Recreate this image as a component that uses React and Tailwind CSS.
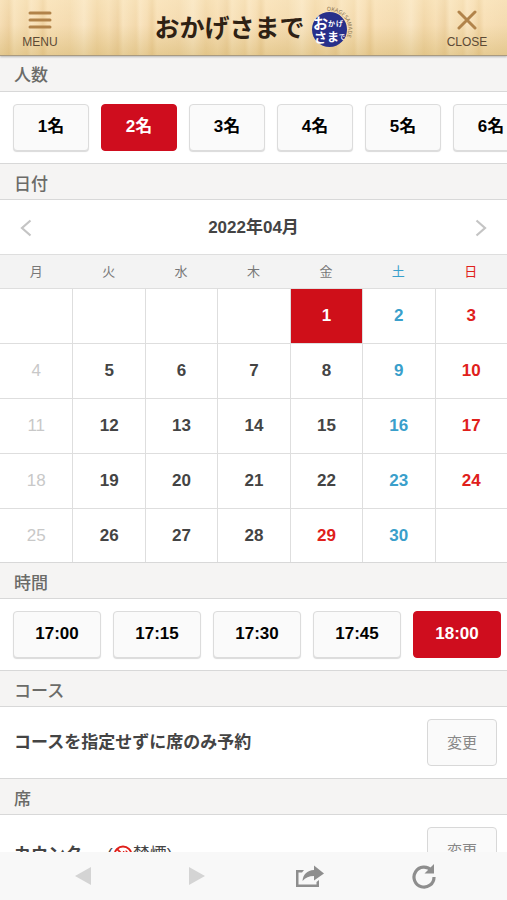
import { useState } from 'react'

const people = ['1名', '2名', '3名', '4名', '5名', '6名']
const times = ['17:00', '17:15', '17:30', '17:45', '18:00']
const weekdays = ['月', '火', '水', '木', '金', '土', '日']
const weeks = [
  [null, null, null, null, 1, 2, 3],
  [4, 5, 6, 7, 8, 9, 10],
  [11, 12, 13, 14, 15, 16, 17],
  [18, 19, 20, 21, 22, 23, 24],
  [25, 26, 27, 28, 29, 30, null],
]
const holidays = [29]

export default function App() {
  const [count, setCount] = useState('2名')
  const [day, setDay] = useState(1)
  const [time, setTime] = useState('18:00')

  return (
    <div className="h-screen flex flex-col bg-white text-[#444] text-[17px] leading-6 font-['Liberation_Sans','Noto_Sans_CJK_JP',sans-serif]">
      <Header />

      <main className="flex-1 min-h-0 overflow-y-auto [scrollbar-width:none]">
        <SectionTitle first>人数</SectionTitle>
        <div className="flex gap-3 px-[13px] py-3 overflow-x-auto [scrollbar-width:none]">
          {people.map((p) => (
            <Choice key={p} selected={p === count} onClick={() => setCount(p)} width="w-[76px]">
              {p}
            </Choice>
          ))}
        </div>

        <SectionTitle>日付</SectionTitle>
        <div className="flex items-center justify-between h-[54px] px-[18px] pt-[2px]">
          <button aria-label="前の月" className="w-4 flex justify-center">
            <svg width="12" height="18" viewBox="0 0 12 18" fill="none" stroke="#c4c4c4" strokeWidth="2.2">
              <path d="M10.5 1.5 2 9l8.5 7.5" />
            </svg>
          </button>
          <h3 className="font-bold">2022年04月</h3>
          <button aria-label="次の月" className="w-4 flex justify-center">
            <svg width="12" height="18" viewBox="0 0 12 18" fill="none" stroke="#c4c4c4" strokeWidth="2.2">
              <path d="M1.5 1.5 10 9l-8.5 7.5" />
            </svg>
          </button>
        </div>
        <Calendar day={day} onSelect={setDay} />

        <SectionTitle>時間</SectionTitle>
        <div className="flex gap-3 px-[13px] py-3 overflow-x-auto [scrollbar-width:none]">
          {times.map((t) => (
            <Choice key={t} selected={t === time} onClick={() => setTime(t)} width="w-[88px]">
              {t}
            </Choice>
          ))}
        </div>

        <SectionTitle>コース</SectionTitle>
        <ChangeRow>
          <p className="font-bold">コースを指定せずに席のみ予約</p>
        </ChangeRow>

        <SectionTitle>席</SectionTitle>
        <ChangeRow>
          <p className="flex items-center pt-2 font-bold">
            カウンター
            <span className="ml-2 inline-flex items-center font-normal">
              (
              <NoSmoking />
              禁煙)
            </span>
          </p>
        </ChangeRow>
      </main>

      <BrowserBar />
    </div>
  )
}

function Header() {
  return (
    <header className="relative z-10 shrink-0 h-14 flex items-center justify-between border-b border-[#a99a80] shadow-[0_1px_2px_rgba(0,0,0,0.25)] bg-[linear-gradient(to_bottom,rgba(255,240,205,0.3),rgba(245,225,175,0)_45%,rgba(190,155,65,0.3)),repeating-linear-gradient(to_right,#f6deb5_0px,#efd3a4_9px,#f8e3bd_14px,#f3d9ac_27px,#f9e4c0_31px,#f6ddb3_38px,#efd2a1_43px,#f8e0b7_48px,#f4dbb0_70px,#f9e6c4_84px,#f2d7a8_97px,#f7dfb5_109px)]">
      <button className="w-20 pt-1 flex flex-col items-center gap-1 text-xs leading-4 text-[#5c4a35]">
        <svg width="24" height="20" viewBox="0 0 24 20" stroke="#b1834a" strokeWidth="3" strokeLinecap="round">
          <path d="M2 3h20M2 10h20M2 17h20" />
        </svg>
        MENU
      </button>
      <h1 className="flex items-center gap-1 text-[25px] leading-9 font-bold text-[#2e2114]">
        おかげさまで
        <Logo />
      </h1>
      <button className="w-20 pt-1 flex flex-col items-center gap-1 text-xs leading-4 text-[#5c4a35]">
        <svg width="20" height="20" viewBox="0 0 20 20" stroke="#b1834a" strokeWidth="3" strokeLinecap="round">
          <path d="M2 2l16 16M18 2 2 18" />
        </svg>
        CLOSE
      </button>
    </header>
  )
}

function Logo() {
  return (
    <svg
      width="44"
      height="46"
      viewBox="0 0 44 46"
      className="overflow-visible"
      fontFamily="'Noto Sans CJK JP', sans-serif"
      fontWeight="700"
    >
      <defs>
        <path id="ring" d="M18 6.200A18.500 18.500 0 0 1 36 35" />
      </defs>
      <circle cx="20.500" cy="24.500" r="17.500" fill="#28308a" />
      <text fontSize="5.500" fontWeight="400" fill="#8a744f">
        <textPath href="#ring">OKAGESAMADE</textPath>
      </text>
      <g fill="#fff">
        <text x="4" y="24" fontSize="15">お</text>
        <text x="19" y="21" fontSize="7">か</text>
        <text x="27" y="21" fontSize="7">げ</text>
        <text x="5" y="37" fontSize="13">さ</text>
        <text x="18" y="37" fontSize="12">ま</text>
        <text x="30" y="34" fontSize="6">で</text>
      </g>
    </svg>
  )
}

function SectionTitle({ children, first }) {
  return (
    <h2
      className={`h-[37px] flex items-center px-[14px] pt-[6px] bg-[#f5f4f3] border-b border-[#d8d8d8] font-medium text-[#6b6b68] ${
        first ? 'mt-[-1px]' : 'border-t'
      }`}
    >
      {children}
    </h2>
  )
}

function Choice({ children, selected, onClick, width }) {
  return (
    <button
      onClick={onClick}
      aria-pressed={selected}
      className={`shrink-0 h-[47px] pb-[2px] rounded border font-bold ${width} ${
        selected
          ? 'bg-[#cf0d1e] border-[#cf0d1e] text-white'
          : 'bg-[#fafafa] border-[#dcdcdc] text-black shadow-[0_1px_1px_rgba(0,0,0,0.15)]'
      }`}
    >
      {children}
    </button>
  )
}

function Calendar({ day, onSelect }) {
  const color = (d, i) => {
    if (d === day) return 'font-bold text-white'
    if (i === 0) return 'text-[#c8c8c8]'
    if (i === 6 || holidays.includes(d)) return 'font-bold text-[#e0201b]'
    if (i === 5) return 'font-bold text-[#3a9fcb]'
    return 'font-bold text-[#444]'
  }

  return (
    <table className="w-full table-fixed border-separate border-spacing-0">
      <thead>
        <tr className="bg-[#f3f3f3] text-[13px] leading-4 text-[#777]">
          {weekdays.map((w, i) => (
            <th
              key={w}
              className={`h-[35px] p-0 font-normal border-t border-b border-[#dedede] ${
                i === 5 ? 'text-[#3a9fcb]' : i === 6 ? 'text-[#e0201b]' : ''
              }`}
            >
              {w}
            </th>
          ))}
        </tr>
      </thead>
      <tbody>
        {weeks.map((week, n) => (
          <tr key={n}>
            {week.map((d, i) => (
              <td
                key={i}
                className={`p-0 border-[#dedede] ${i > 0 ? 'border-l' : ''} ${
                  n < 4 ? 'h-[55px] border-b' : 'h-[53px]'
                } ${d && d === day ? 'bg-[#cf0f19]' : ''}`}
              >
                {d && (
                  <button
                    onClick={() => onSelect(d)}
                    disabled={i === 0}
                    className={`block w-full h-[52px] ${color(d, i)}`}
                  >
                    {d}
                  </button>
                )}
              </td>
            ))}
          </tr>
        ))}
      </tbody>
    </table>
  )
}

function ChangeRow({ children }) {
  return (
    <div className="flex items-center justify-between pl-[14px] pr-[10px] py-3">
      {children}
      <button className="w-[70px] h-[47px] rounded border border-[#d8d8d8] bg-[#fafafa] text-[15px] text-[#888]">
        変更
      </button>
    </div>
  )
}

function NoSmoking() {
  return (
    <svg width="20" height="20" viewBox="0 0 20 20" fill="none" stroke="#e0201b" strokeWidth="1.8">
      <circle cx="10" cy="10" r="8.5" />
      <path d="M4 4l12 12" />
      <path d="M4.500 12h8M14 12h2M13.500 9.500c0-2-3-1-3-3.500M15.500 9.500c0-3-2.500-2-2.500-4" strokeWidth="1.3" />
    </svg>
  )
}

function BrowserBar() {
  return (
    <nav className="relative z-10 shrink-0 h-12 grid grid-cols-4 items-center justify-items-center px-[26px] bg-[#f8f8f8]">
      <button aria-label="戻る">
        <svg width="16" height="18" viewBox="0 0 16 18" fill="#d4d4d4">
          <path d="M16 0v18L0 9z" />
        </svg>
      </button>
      <button aria-label="進む">
        <svg width="16" height="18" viewBox="0 0 16 18" fill="#d4d4d4">
          <path d="M0 0v18l16-9z" />
        </svg>
      </button>
      <button aria-label="共有">
        <svg width="30" height="24" viewBox="0 0 30 24" fill="#8e8e8e">
          <path d="M1 6h8L7 8.500H3.500v12h18V18l2.500-2v7H1z" />
          <path d="M7.500 17C8 10.500 12 6.500 19 6V1.500L29 9.500l-10 7V12c-5 0-8.500 1.500-11.500 5z" />
        </svg>
      </button>
      <button aria-label="再読み込み">
        <svg width="24" height="26" viewBox="0 0 24 26">
          <path d="M19.500 7.500A10 10 0 1 0 22 14" fill="none" stroke="#8e8e8e" strokeWidth="3.200" />
          <path d="M22 1v9.500h-9.500z" fill="#8e8e8e" />
        </svg>
      </button>
    </nav>
  )
}
